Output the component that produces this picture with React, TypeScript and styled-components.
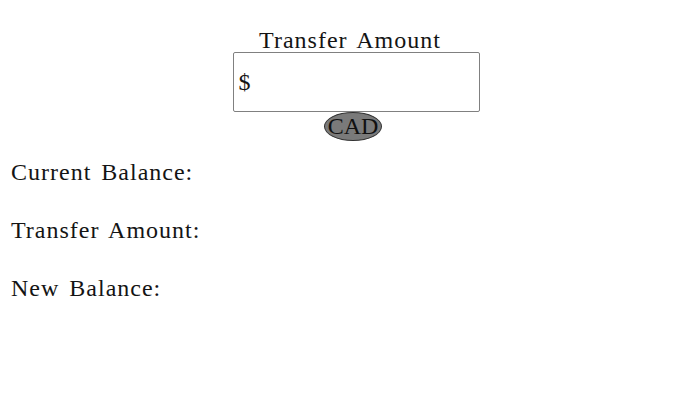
import React from "react";
import styled, { createGlobalStyle } from "styled-components";

const Global = createGlobalStyle`
  html, body { margin: 0; padding: 0; background: #fff; }
  body { font-family: "Liberation Serif", serif; color: #141414; }
`;

const Page = styled.div`
  display: flex;
  flex-direction: column;
  padding: 28px 11px 0 11px;
`;

const Transfer = styled.div`
  display: flex;
  flex-direction: column;
  align-items: center;
`;

const Title = styled.div`
  font-size: 24px;
  line-height: 24px;
  letter-spacing: 1px;
  word-spacing: 3px;
`;

const InputBox = styled.div`
  box-sizing: border-box;
  width: 247px;
  height: 60px;
  margin-left: 12px;
  border: 1px solid #808080;
  border-radius: 2px;
  display: flex;
  align-items: center;
  padding-left: 5px;
  font-size: 24px;
`;

const Currency = styled.div`
  box-sizing: border-box;
  width: 58px;
  height: 29px;
  margin-left: 6px;
  border-radius: 50%;
  background: #7a7a7a;
  border: 1px solid #333;
  display: flex;
  align-items: center;
  justify-content: center;
  font-size: 24px;
  line-height: 29px;
  color: #111;
`;

const Summary = styled.div`
  display: flex;
  flex-direction: column;
  gap: 33px;
  margin-top: 19px;
`;

const Label = styled.div`
  font-size: 24px;
  line-height: 25px;
  letter-spacing: 1px;
  word-spacing: 3px;
`;

export default function App() {
  return (
    <>
      <Global />
      <Page>
        <Transfer>
          <Title>Transfer Amount</Title>
          <InputBox>$</InputBox>
          <Currency>CAD</Currency>
        </Transfer>
        <Summary>
          <Label>Current Balance:</Label>
          <Label>Transfer Amount:</Label>
          <Label>New Balance:</Label>
        </Summary>
      </Page>
    </>
  );
}
